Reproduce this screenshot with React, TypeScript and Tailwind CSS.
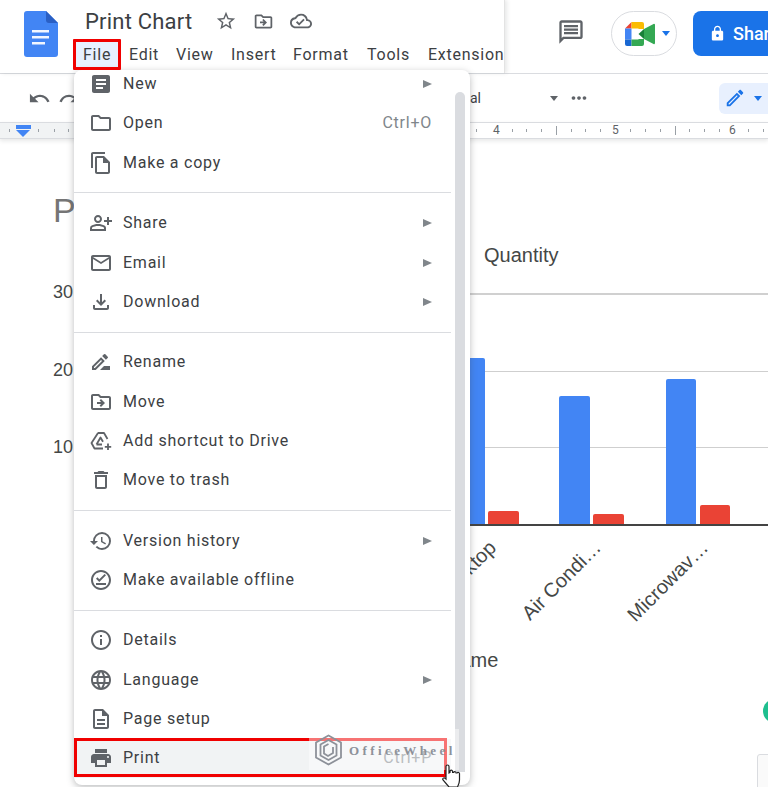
import React from 'react'
import {
  MdArticle,
  MdOutlineFolder,
  MdOutlineFileCopy,
  MdOutlinePersonAddAlt,
  MdOutlineEmail,
  MdOutlineFileDownload,
  MdOutlineDriveFileRenameOutline,
  MdOutlineDriveFileMove,
  MdOutlineDelete,
  MdHistory,
  MdOutlineOfflinePin,
  MdInfoOutline,
  MdLanguage,
  MdOutlineDescription,
  MdPrint,
  MdStarBorder,
  MdOutlineCloudDone,
  MdUndo,
  MdRedo,
  MdOutlineComment,
  MdLock,
  MdOutlineEdit,
  MdMoreHoriz,
} from 'react-icons/md'

type Item = {
  label: string
  icon: React.ComponentType<{ className?: string }>
  shortcut?: string
  arrow?: boolean
}

// the drive triangle in the package is filled, the menu one is outlined
const DriveShortcut = ({ className }: { className?: string }) => (
  <svg className={className} width="1em" height="1em" viewBox="0 0 24 24" fill="none" stroke="currentColor" strokeWidth="1.800" strokeLinejoin="round">
    <path d="M9 4h6l3.500 6M9 4L2.500 14l3 5.500H14M9 4l-.5.500" />
    <path d="M7.500 15.500l4-7 2.500 4.300M7.500 15.500H13" />
    <path d="M19 14.500v6.500M15.800 17.800h6.400" />
  </svg>
)

const groups: Item[][] = [
  [
    { label: 'New', icon: MdArticle, arrow: true },
    { label: 'Open', icon: MdOutlineFolder, shortcut: 'Ctrl+O' },
    { label: 'Make a copy', icon: MdOutlineFileCopy },
  ],
  [
    { label: 'Share', icon: MdOutlinePersonAddAlt, arrow: true },
    { label: 'Email', icon: MdOutlineEmail, arrow: true },
    { label: 'Download', icon: MdOutlineFileDownload, arrow: true },
  ],
  [
    { label: 'Rename', icon: MdOutlineDriveFileRenameOutline },
    { label: 'Move', icon: MdOutlineDriveFileMove },
    { label: 'Add shortcut to Drive', icon: DriveShortcut },
    { label: 'Move to trash', icon: MdOutlineDelete },
  ],
  [
    { label: 'Version history', icon: MdHistory, arrow: true },
    { label: 'Make available offline', icon: MdOutlineOfflinePin },
  ],
  [
    { label: 'Details', icon: MdInfoOutline },
    { label: 'Language', icon: MdLanguage, arrow: true },
    { label: 'Page setup', icon: MdOutlineDescription },
    { label: 'Print', icon: MdPrint, shortcut: 'Ctrl+P' },
  ],
]

const menuBar = [
  { label: 'Edit', w: 'w-[47px]' },
  { label: 'View', w: 'w-[55px]' },
  { label: 'Insert', w: 'w-[62px]' },
  { label: 'Format', w: 'w-[74px]' },
  { label: 'Tools', w: 'w-[61px]' },
  { label: 'Extensions', w: 'w-[90px]' },
]

const rulerTicks = [9, 38, 54, 68, 432, 447, 461, 476, 512, 526, 541, 571, 585, 600, 630, 645, 660, 689, 704, 719, 748, 763]

const DocsLogo = () => (
  <svg width="34" height="46" viewBox="0 0 34 46">
    <path d="M3 0h19l12 12v31a3 3 0 0 1-3 3H3a3 3 0 0 1-3-3V3a3 3 0 0 1 3-3z" fill="#4285f4" />
    <path d="M22 0l12 12H25a3 3 0 0 1-3-3z" fill="#2a5fc4" />
    <path d="M8 19h17v2.600H8zM8 25h17v2.600H8zM8 31h13v2.600H8z" fill="#f1f6ff" />
  </svg>
)

const MeetLogo = () => (
  <svg width="30" height="24" viewBox="0 0 30 24">
    <path d="M6.500 0L0 6.500h6.500z" fill="#ea4335" />
    <path d="M6.500 0H17a2 2 0 0 1 2 2v5h-5.500V6.500h-7z" fill="#fbbc04" />
    <path d="M0 6.500h6.500v11H0z" fill="#4285f4" />
    <path d="M0 17.500h6.500V24H2a2 2 0 0 1-2-2z" fill="#1967d2" />
    <path d="M6.500 17.500h7V17H19v5a2 2 0 0 1-2 2H6.500z" fill="#34a853" />
    <path d="M13.500 12L19 7v10z" fill="#188038" />
    <path d="M19 7l9.500-5A1 1 0 0 1 30 3v18a1 1 0 0 1-1.500 1L19 17z" fill="#34a853" />
  </svg>
)

const Caret = ({ className }: { className: string }) => (
  <span className={`w-0 h-0 border-x-[4.5px] border-x-transparent border-t-[5px] ${className}`} />
)

const MenuRow = ({ item }: { item: Item }) => {
  const Icon = item.icon
  const isPrint = item.label === 'Print'
  return (
    <div className={`h-[39.300px] flex items-center pl-[4px] pr-[19px] ${isPrint ? 'bg-[#f1f3f4]' : ''}`}>
      <span className="w-[45px] shrink-0 flex pl-[11px]">
        <Icon className="text-[24px] text-[#5f6368]" />
      </span>
      <span className="text-[16px] tracking-[0.75px] text-[#3c4043]">{item.label}</span>
      <span className="ml-auto flex items-center">
        {item.shortcut && <span className="text-[16px] tracking-[0.75px] text-[#80868b]">{item.shortcut}</span>}
        {item.arrow && (
          <span className="w-0 h-0 border-y-[4.500px] border-y-transparent border-l-[9px] border-l-[#80868b]" />
        )}
      </span>
    </div>
  )
}

const FileMenu = () => (
  <div className="absolute left-[74px] top-[70px] w-[396px] h-[715px] bg-white rounded-lg overflow-hidden shadow-[0_2px_7px_rgba(60,64,67,0.35)] font-['Roboto',sans-serif]">
    <div className="mt-[-5.500px] w-[377px]">
      {groups.map((group, i) => (
        <div key={i}>
          {i > 0 && (
            <div className="h-[21.200px] flex items-center">
              <div className="w-full h-px bg-[#dadce0]" />
            </div>
          )}
          {group.map((item) => (
            <MenuRow key={item.label} item={item} />
          ))}
        </div>
      ))}
    </div>
    <div className="absolute left-[381px] top-[22px] w-[10px] h-[680px] rounded-t-md bg-[#dadce0]" />
  </div>
)

const Watermark = () => (
  <div className="absolute left-[309px] top-[729px] w-[150px] h-[41px] bg-white/45 flex items-center pl-[5px]">
    <svg width="29" height="32" viewBox="0 0 29 32" fill="none" stroke="#8d9199" strokeWidth="1.800">
      <path d="M14.500 1.500L27 8.500v15L14.500 30.500 2 23.500v-15z" />
      <path d="M14.500 6L22.500 10.500v11L14.500 26 6.500 21.500v-11z" />
      <path d="M19 13v6l-5 3-4-2.500v-7l4.500-2.500" />
    </svg>
    <span className="ml-[6px] mt-[2px] font-['Liberation_Serif',serif] text-[13px] font-bold tracking-[3.400px] text-[#8d9199] whitespace-nowrap">
      OfficeWheel
    </span>
  </div>
)

const RedBoxes = () => (
  <>
    <div className="absolute left-[73px] top-[39px] w-[48px] h-[31px] border-[3px] border-[#f00000] rounded-[1px]" />
    <div className="absolute left-[74px] top-[738px] w-[373px] h-[39px] border-[3px] border-[#f00000]" />
  </>
)

const HandCursor = () => (
  <svg className="absolute left-[441px] top-[763px]" width="22" height="26" viewBox="0 0 22 26" fill="#fff" stroke="#222" strokeWidth="1.200">
    <path d="M5 3.500a1.500 1.500 0 0 1 3 0V10l1-.5v-1a1.300 1.300 0 0 1 2.600 0v1l1 0a1.300 1.300 0 0 1 2.500.500l1 0a1.300 1.300 0 0 1 2.400.800V17c0 3-1 5-2 7H8l-6-7c-1-1.500 1-3 2.500-1.500L5 16z" />
  </svg>
)

const Chart = () => (
  <div className="absolute left-0 top-0 w-[768px] h-[787px] font-['Liberation_Sans',sans-serif] text-[#444746]">
    <span className="absolute left-[53px] top-[190px] text-[34px] leading-[40px] text-[#757575]">P</span>
    <span className="absolute left-[53px] top-[281px] text-[18px] leading-[22px]">30</span>
    <span className="absolute left-[53px] top-[359px] text-[18px] leading-[22px]">20</span>
    <span className="absolute left-[53px] top-[436px] text-[18px] leading-[22px]">10</span>
    <span className="absolute left-[484px] top-[243px] text-[20px] leading-[24px]">Quantity</span>

    <div className="absolute left-[440px] top-[293px] w-[328px] h-[2px] bg-[#d0d0d0]" />
    <div className="absolute left-[440px] top-[371px] w-[328px] h-px bg-[#cfcfcf]" />
    <div className="absolute left-[440px] top-[447px] w-[328px] h-px bg-[#cfcfcf]" />

    <div className="absolute left-[440px] top-[358px] w-[45px] h-[167px] rounded-t-[2px] bg-[#4285f4]" />
    <div className="absolute left-[559px] top-[396px] w-[31px] h-[129px] rounded-t-[2px] bg-[#4285f4]" />
    <div className="absolute left-[666px] top-[379px] w-[30px] h-[146px] rounded-t-[2px] bg-[#4285f4]" />
    <div className="absolute left-[488px] top-[511px] w-[31px] h-[14px] rounded-t-[2px] bg-[#ea4335]" />
    <div className="absolute left-[593px] top-[514px] w-[31px] h-[11px] rounded-t-[2px] bg-[#ea4335]" />
    <div className="absolute left-[700px] top-[505px] w-[30px] h-[20px] rounded-t-[2px] bg-[#ea4335]" />
    <div className="absolute left-[440px] top-[524px] w-[328px] h-[2px] bg-[#444]" />

    <span className="absolute right-[276px] top-[532px] text-[20px] leading-[24px] -rotate-45 origin-right whitespace-nowrap">Desktop</span>
    <span className="absolute right-[171px] top-[532px] text-[20px] leading-[24px] -rotate-45 origin-right whitespace-nowrap">Air Condi…</span>
    <span className="absolute right-[64px] top-[532px] text-[20px] leading-[24px] -rotate-45 origin-right whitespace-nowrap">Microwav…</span>

    <span className="absolute left-[445px] top-[648px] text-[20px] leading-[24px]">Name</span>

    <div className="absolute left-[763px] top-[699px] w-[24px] h-[24px] rounded-full bg-[#1fbf8f]" />
    <div className="absolute left-[757px] top-[754px] w-[40px] h-[50px] rounded-[3px] border border-[#dadce0] bg-[#fafafa]" />
  </div>
)

const Ruler = () => (
  <div className="h-[17px] border-y border-[#dadce0] shadow-[0_2px_4px_rgba(60,64,67,0.12)] flex relative font-['Roboto',sans-serif]">
    <div className="w-[74px] bg-[#f1f3f4] relative">
      <div className="absolute left-[16px] top-[2px] w-[15px] h-[4px] bg-[#4285f4]" />
      <div className="absolute left-[16px] top-[7px] w-0 h-0 border-x-[7.500px] border-x-transparent border-t-[7px] border-t-[#4285f4]" />
    </div>
    {rulerTicks.map((x) => (
      <div key={x} className="absolute top-[6px] w-px h-[3px] bg-[#9aa0a6]" style={{ left: x }} />
    ))}
    <div className="absolute left-[556px] top-[3px] w-px h-[9px] bg-[#9aa0a6]" />
    <div className="absolute left-[675px] top-[3px] w-px h-[9px] bg-[#9aa0a6]" />
    <span className="absolute left-[493px] top-0 text-[12px] leading-[15px] text-[#5f6368]">4</span>
    <span className="absolute left-[612px] top-0 text-[12px] leading-[15px] text-[#5f6368]">5</span>
    <span className="absolute left-[729px] top-0 text-[12px] leading-[15px] text-[#5f6368]">6</span>
  </div>
)

export default function App() {
  return (
    <div className="relative w-[768px] h-[787px] bg-white overflow-hidden">
      <div className="relative flex flex-col">
        {/* title bar */}
        <header className="h-[74px] flex border-b border-[#dadce0] font-['Roboto',sans-serif]">
          <div className="w-[505px] shrink-0 flex overflow-hidden border-r border-[#e3e3e3] shadow-[2px_0_4px_rgba(60,64,67,0.12)]">
            <div className="w-[73px] shrink-0 pl-[24px] pt-[11px]">
              <DocsLogo />
            </div>
            <div className="flex flex-col">
              <div className="h-[39px] pt-[3px] flex items-center pl-[12px]">
                <span className="text-[22px] tracking-[0.2px] text-[#3c4043] w-[123px]">Print Chart</span>
                <span className="w-[36px] flex justify-center"><MdStarBorder className="text-[22px] text-[#5f6368]" /></span>
                <span className="w-[38px] flex justify-center"><MdOutlineDriveFileMove className="text-[21px] text-[#5f6368]" /></span>
                <span className="w-[38px] flex justify-center"><MdOutlineCloudDone className="text-[22px] text-[#5f6368]" /></span>
              </div>
              <nav className="flex text-[16px] tracking-[0.75px] text-[#3c4043] h-[31px] items-center whitespace-nowrap">
                <span className="w-[48px] h-[31px] pl-[10px] pt-px flex items-center bg-[#e8f0fe]">File</span>
                {menuBar.map((m) => (
                  <span key={m.label} className={`${m.w} pl-[8px] pt-px shrink-0`}>{m.label}</span>
                ))}
              </nav>
            </div>
          </div>
          <div className="flex-1 flex items-start pt-[11px]">
            <span className="w-[106px] pl-[52px] pt-[7px]">
              <MdOutlineComment className="text-[28px] text-[#5f6368] scale-x-[-1]" />
            </span>
            <div className="w-[66px] h-[45px] rounded-full border border-[#dadce0] flex items-center pl-[13px] gap-[7px]">
              <MeetLogo />
              <Caret className="border-t-[#1a73e8]" />
            </div>
            <div className="ml-[16px] flex-1 h-[45px] rounded-l-lg bg-[#1a73e8] flex items-center pl-[16px] text-white text-[18px] font-medium whitespace-nowrap overflow-hidden">
              <MdLock className="text-[17px] mr-[7px] shrink-0" />
              <span>Share</span>
            </div>
          </div>
        </header>
        {/* toolbar */}
        <div className="h-[48px] flex items-center font-['Roboto',sans-serif]">
          <MdUndo className="ml-[28px] text-[23px] text-[#5f6368]" />
          <MdRedo className="ml-[7px] text-[23px] text-[#5f6368]" />
          <span className="ml-[354px] text-[14px] text-[#3c4043]">Normal</span>
          <span className="ml-[69px]" />
          <Caret className="border-t-[#5f6368]" />
          <MdMoreHoriz className="ml-[10px] text-[22px] text-[#5f6368]" />
          <div className="ml-auto w-[49px] h-[31px] rounded-l-md bg-[#e8f0fe] flex items-center pl-[5px] gap-[8px]">
            <MdOutlineEdit className="text-[22px] text-[#1a73e8]" />
            <Caret className="border-t-[#1a73e8]" />
          </div>
        </div>
        <Ruler />
      </div>
      <Chart />
      <FileMenu />
      <RedBoxes />
      <Watermark />
      <HandCursor />
    </div>
  )
}
